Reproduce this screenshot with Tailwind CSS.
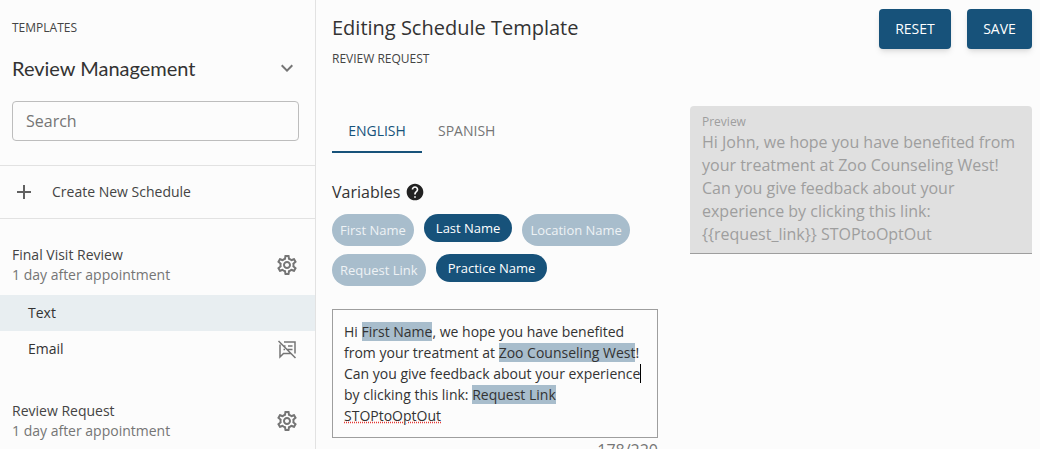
<!DOCTYPE html>
<html lang="en">
<head>
    <meta charset="UTF-8">
    <meta name="viewport" content="width=device-width, initial-scale=1.0">
    <title>Editing Schedule Template</title>
    <script src="https://cdn.jsdelivr.net/npm/@tailwindcss/browser@4"></script>
</head>
<body class="bg-[#fcfcfc] font-['Open_Sans',sans-serif] text-[#333] overflow-hidden">
<div class="flex h-[449px] overflow-hidden">
    <!-- sidebar -->
    <aside class="w-[316px] shrink-0 border-r border-[#e2e2e2]">
        <div class="px-3 pt-[20px]">
            <p class="text-xs leading-4 text-[#444]">TEMPLATES</p>
            <div class="mt-[18px] flex items-center justify-between h-[28px]">
                <h2 class="font-['Lato',sans-serif] text-[20px] text-[#333]">Review Management</h2>
                <svg class="w-6 h-6 mr-1 text-[#757575]" viewBox="0 0 24 24" fill="currentColor"><path d="M16.59 8.59 12 13.17 7.41 8.59 6 10l6 6 6-6z"/></svg>
            </div>
            <div class="mt-[19px] h-10 w-[287px] border border-[#bdbdbd] rounded flex items-center px-[13px] text-base text-[#757575]">Search</div>
        </div>
        <div class="mt-6 border-y border-[#e2e2e2] h-[54px] flex items-center pl-3">
            <svg class="w-6 h-6 text-[#616161]" viewBox="0 0 24 24" fill="currentColor"><path d="M19 13h-6v6h-2v-6H5v-2h6V5h2v6h6v2z"/></svg>
            <span class="ml-4 pb-[1px] text-[14px] text-[#444]">Create New Schedule</span>
        </div>
        <div class="mt-[26px] pl-3 pr-4 flex items-center justify-between h-[40px]">
            <div>
                <p class="text-[14px] leading-5 text-[#444]">Final Visit Review</p>
                <p class="text-[14px] leading-5 text-[#757575]">1 day after appointment</p>
            </div>
            <svg class="w-6 h-6 text-[#757575]" viewBox="0 0 24 24" fill="currentColor"><path d="M19.43 12.98c.04-.32.07-.64.07-.98 0-.34-.03-.66-.07-.98l2.11-1.65c.19-.15.24-.42.12-.64l-2-3.46c-.09-.16-.26-.25-.44-.25-.06 0-.12.01-.17.03l-2.49 1c-.52-.4-1.08-.73-1.69-.98l-.38-2.65C14.46 2.18 14.25 2 14 2h-4c-.25 0-.46.18-.49.42l-.38 2.65c-.61.25-1.17.59-1.69.98l-2.49-1c-.06-.02-.12-.03-.18-.03-.17 0-.34.09-.43.25l-2 3.46c-.13.22-.07.49.12.64l2.11 1.65c-.04.32-.07.65-.07.98 0 .33.03.66.07.98l-2.11 1.65c-.19.15-.24.42-.12.64l2 3.46c.09.16.26.25.44.25.06 0 .12-.01.17-.03l2.49-1c.52.4 1.08.73 1.69.98l.38 2.65c.03.24.24.42.49.42h4c.25 0 .46-.18.49-.42l.38-2.65c.61-.25 1.17-.59 1.69-.98l2.49 1c.06.02.12.03.18.03.17 0 .34-.09.43-.25l2-3.46c.12-.22.07-.49-.12-.64l-2.11-1.65zm-1.98-1.71c.04.31.05.52.05.73 0 .21-.02.43-.05.73l-.14 1.13.89.7 1.08.84-.7 1.21-1.27-.51-1.04-.42-.9.68c-.43.32-.84.56-1.25.73l-1.06.43-.16 1.13-.2 1.35h-1.4l-.19-1.35-.16-1.13-1.06-.43c-.43-.18-.83-.41-1.23-.71l-.91-.7-1.06.43-1.27.51-.7-1.21 1.08-.84.89-.7-.14-1.13c-.03-.31-.05-.54-.05-.74s.02-.43.05-.73l.14-1.13-.89-.7-1.08-.84.7-1.21 1.27.51 1.04.42.9-.68c.43-.32.84-.56 1.25-.73l1.06-.43.16-1.13.2-1.35h1.39l.19 1.35.16 1.13 1.06.43c.43.18.83.41 1.23.71l.91.7 1.06-.43 1.27-.51.7 1.21-1.07.85-.89.7.14 1.13zM12 8c-2.21 0-4 1.79-4 4s1.79 4 4 4 4-1.79 4-4-1.79-4-4-4zm0 6c-1.1 0-2-.9-2-2s.9-2 2-2 2 .9 2 2-.9 2-2 2z"/></svg>
        </div>
        <div class="mt-[10px] h-9 pb-[1px] bg-[#e8eef1] flex items-center pl-7 text-[14px] text-[#333]">Text</div>
        <div class="h-9 pb-[1px] flex items-center justify-between pl-7 pr-[18px] text-[14px] text-[#333]">
            <span>Email</span>
            <svg class="w-5 h-5 text-[#757575]" viewBox="0 0 20 20" fill="none" stroke="currentColor" stroke-width="1.5"><path d="M3 5.500V18l3.500-3.500H14M7 3h11v11.500M1.500 2l17 17M6.500 7h2M11 7h4.500M10 10.500h5.500M6.500 10.500l1.500 0"/></svg>
        </div>
        <div class="mt-[34px] pl-3 pr-4 flex items-center justify-between h-[40px]">
            <div>
                <p class="text-[14px] leading-5 text-[#444]">Review Request</p>
                <p class="text-[14px] leading-5 text-[#757575]">1 day after appointment</p>
            </div>
            <svg class="w-6 h-6 text-[#757575]" viewBox="0 0 24 24" fill="currentColor"><path d="M19.43 12.98c.04-.32.07-.64.07-.98 0-.34-.03-.66-.07-.98l2.11-1.65c.19-.15.24-.42.12-.64l-2-3.46c-.09-.16-.26-.25-.44-.25-.06 0-.12.01-.17.03l-2.49 1c-.52-.4-1.08-.73-1.69-.98l-.38-2.65C14.46 2.18 14.25 2 14 2h-4c-.25 0-.46.18-.49.42l-.38 2.65c-.61.25-1.17.59-1.69.98l-2.49-1c-.06-.02-.12-.03-.18-.03-.17 0-.34.09-.43.25l-2 3.46c-.13.22-.07.49.12.64l2.11 1.65c-.04.32-.07.65-.07.98 0 .33.03.66.07.98l-2.11 1.65c-.19.15-.24.42-.12.64l2 3.46c.09.16.26.25.44.25.06 0 .12-.01.17-.03l2.49-1c.52.4 1.08.73 1.69.98l.38 2.65c.03.24.24.42.49.42h4c.25 0 .46-.18.49-.42l.38-2.65c.61-.25 1.17-.59 1.69-.98l2.49 1c.06.02.12.03.18.03.17 0 .34-.09.43-.25l2-3.46c.12-.22.07-.49-.12-.64l-2.11-1.65zm-1.98-1.71c.04.31.05.52.05.73 0 .21-.02.43-.05.73l-.14 1.13.89.7 1.08.84-.7 1.21-1.27-.51-1.04-.42-.9.68c-.43.32-.84.56-1.25.73l-1.06.43-.16 1.13-.2 1.35h-1.4l-.19-1.35-.16-1.13-1.06-.43c-.43-.18-.83-.41-1.23-.71l-.91-.7-1.06.43-1.27.51-.7-1.21 1.08-.84.89-.7-.14-1.13c-.03-.31-.05-.54-.05-.74s.02-.43.05-.73l.14-1.13-.89-.7-1.08-.84.7-1.21 1.27.51 1.04.42.9-.68c.43-.32.84-.56 1.25-.73l1.06-.43.16-1.13.2-1.35h1.39l.19 1.35.16 1.13 1.06.43c.43.18.83.41 1.23.71l.91.7 1.06-.43 1.27-.51.7 1.21-1.07.85-.89.7.14 1.13zM12 8c-2.21 0-4 1.79-4 4s1.79 4 4 4 4-1.79 4-4-1.79-4-4-4zm0 6c-1.1 0-2-.9-2-2s.9-2 2-2 2 .9 2 2-.9 2-2 2z"/></svg>
        </div>
    </aside>

    <!-- main -->
    <main class="flex-1 pl-4 pr-2">
        <div class="flex justify-between">
            <div class="pt-[15px]">
                <h1 class="text-[20px] leading-[26px] text-[#333]">Editing Schedule Template</h1>
                <p class="mt-[10px] text-xs leading-4 text-[#444]">REVIEW REQUEST</p>
            </div>
            <div class="pt-[9px] flex gap-4">
                <button class="h-10 w-[72px] rounded bg-[#17527a] text-white text-sm shadow-md">RESET</button>
                <button class="h-10 w-[65px] rounded bg-[#17527a] text-white text-sm shadow-md">SAVE</button>
            </div>
        </div>
        <div class="mt-[6px] flex gap-8">
            <div class="w-[326px] shrink-0">
                <div class="flex mt-[33px] h-[47px] text-[14px]">
                    <div class="w-[90px] pt-[3px] flex items-center justify-center border-b-2 border-[#17527a] text-[#17527a]">ENGLISH</div>
                    <div class="ml-4 pt-[1px] flex items-center text-[#757575]">SPANISH</div>
                </div>
                <div class="mt-[27px] flex items-center gap-[5px] h-6">
                    <span class="text-[16px] text-[#333]">Variables</span>
                    <svg class="w-5 h-5 text-[#222]" viewBox="0 0 24 24" fill="currentColor"><path d="M12 2C6.48 2 2 6.48 2 12s4.48 10 10 10 10-4.48 10-10S17.52 2 12 2zm1 17h-2v-2h2v2zm2.070-7.750l-.9.920C13.450 12.900 13 13.500 13 15h-2v-.5c0-1.100.45-2.100 1.170-2.830l1.240-1.260c.37-.36.590-.86.590-1.410 0-1.100-.9-2-2-2s-2 .9-2 2H8c0-2.210 1.790-4 4-4s4 1.790 4 4c0 .88-.36 1.680-.93 2.250z"/></svg>
                </div>
                <div class="mt-[10px] flex flex-wrap items-start gap-x-[10px] gap-y-2 text-[13px]">
                    <span class="h-8 px-2 pt-[1px] rounded-full bg-[#a8bdcc] text-[#eef2f5] flex items-center">First Name</span>
                    <span class="h-7 px-3 pt-[1px] rounded-full bg-[#17527a] text-white flex items-center">Last Name</span>
                    <span class="h-8 px-2 pt-[1px] rounded-full bg-[#a8bdcc] text-[#eef2f5] flex items-center">Location Name</span>
                    <span class="h-8 px-2 pt-[1px] rounded-full bg-[#a8bdcc] text-[#eef2f5] flex items-center">Request Link</span>
                    <span class="h-7 px-3 pt-[1px] rounded-full bg-[#17527a] text-white flex items-center">Practice Name</span>
                </div>
                <div class="mt-[23px] h-[129px] border border-[#9e9e9e] px-[11px] pt-[11px] text-[14px] leading-[21px] text-[#333] whitespace-nowrap">
                    Hi <span class="bg-[#a8bdcc]">First Name</span>, we hope you have benefited<br>
                    from your treatment at <span class="bg-[#a8bdcc]">Zoo Counseling West</span>!<br>
                    Can you give feedback about your experience<span class="border-r border-black"></span><br>
                    by clicking this link: <span class="bg-[#a8bdcc]">Request Link</span><br>
                    <span class="underline decoration-dotted decoration-[#e53935]">STOPtoOptOut</span>
                </div>
                <p class="mt-[2px] text-right text-[16px] leading-5 text-[#757575]">178/220</p>
            </div>
            <div class="w-[342px]">
                <div class="mt-[33px] h-[148px] rounded-t bg-[#e0e0e0] border-b border-[#9e9e9e] px-3 pt-2 text-[#9e9e9e]">
                    <p class="text-xs leading-4">Preview</p>
                    <p class="mt-[1px] text-[16px] leading-[23px] whitespace-nowrap">Hi John, we hope you have benefited from<br>your treatment at Zoo Counseling West!<br>Can you give feedback about your<br>experience by clicking this link:<br>{{request_link}} STOPtoOptOut</p>
                </div>
            </div>
        </div>
    </main>
</div>
</body>
</html>
